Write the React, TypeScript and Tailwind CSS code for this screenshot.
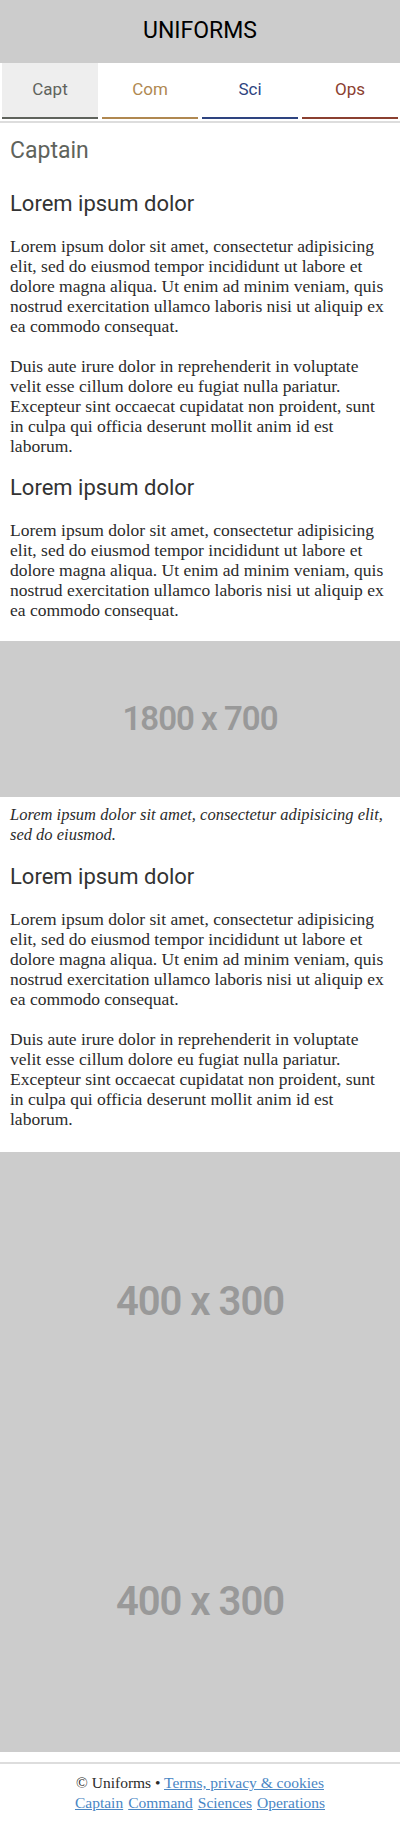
import React from 'react';

const tabs = [
  { label: 'Capt', text: 'text-[#5f635c]', border: 'border-[#5f635c]', bg: 'bg-[#eeeeee]' },
  { label: 'Com', text: 'text-[#b08850]', border: 'border-[#b08850]', bg: 'bg-white' },
  { label: 'Sci', text: 'text-[#2e4480]', border: 'border-[#2e4480]', bg: 'bg-white' },
  { label: 'Ops', text: 'text-[#8b4030]', border: 'border-[#8b4030]', bg: 'bg-white' },
];

const loremA =
  'Lorem ipsum dolor sit amet, consectetur adipisicing elit, sed do eiusmod tempor incididunt ut labore et dolore magna aliqua. Ut enim ad minim veniam, quis nostrud exercitation ullamco laboris nisi ut aliquip ex ea commodo consequat.';
const loremB =
  'Duis aute irure dolor in reprehenderit in voluptate velit esse cillum dolore eu fugiat nulla pariatur. Excepteur sint occaecat cupidatat non proident, sunt in culpa qui officia deserunt mollit anim id est laborum.';

function Placeholder({ label, h, size }: { label: string; h: string; size: string }) {
  return (
    <div className={`w-full ${h} bg-[#cccccc] flex items-center justify-center`}>
      <span className={`font-['Roboto',sans-serif] font-semibold text-[#999999] tracking-[-1px] ${size}`}>{label}</span>
    </div>
  );
}

export default function App() {
  const heading = "font-['Roboto',sans-serif] text-[22px] leading-[24px] text-[#333333]";
  const body = "font-['Liberation_Serif',serif] text-[17.5px] leading-[20px] text-[#2b2b2b]";

  return (
    <div className="w-[400px] bg-white">
      <header className="h-[63px] bg-[#cccccc] flex items-center justify-center">
        <h1 className="font-['Roboto',sans-serif] text-[23px] text-black">UNIFORMS</h1>
      </header>

      <nav className="flex gap-1 px-[2px] pb-[2px] border-b-2 border-[#dddddd]">
        {tabs.map(t => (
          <a
            key={t.label}
            className={`flex-1 h-[56px] flex items-center justify-center border-b-2 font-['Roboto',sans-serif] text-[17px] ${t.text} ${t.border} ${t.bg}`}
          >
            {t.label}
          </a>
        ))}
      </nav>

      <main className="px-[10px]">
        <h2 className="mt-[14px] mb-[27px] font-['Roboto',sans-serif] text-[23px] leading-[28px] text-[#5f635c]">Captain</h2>
        <h3 className={`${heading} mb-5`}>Lorem ipsum dolor</h3>
        <p className={`${body} mb-5`}>{loremA}</p>
        <p className={`${body} mb-5`}>{loremB}</p>
        <h3 className={`${heading} mb-5`}>Lorem ipsum dolor</h3>
        <p className={`${body} mb-[21px]`}>{loremA}</p>
      </main>

      <Placeholder label="1800 x 700" h="h-[156px]" size="text-[33px]" />

      <div className="px-[10px]">
        <p className="mt-2 mb-5 font-['Liberation_Serif',serif] italic text-[16.5px] leading-[20px] text-[#2b2b2b]">
          Lorem ipsum dolor sit amet, consectetur adipisicing elit, sed do eiusmod.
        </p>
        <h3 className={`${heading} mb-5`}>Lorem ipsum dolor</h3>
        <p className={`${body} mb-5`}>{loremA}</p>
        <p className={`${body} mb-[23px]`}>{loremB}</p>
      </div>

      <Placeholder label="400 x 300" h="h-[300px]" size="text-[40px]" />
      <Placeholder label="400 x 300" h="h-[300px]" size="text-[40px]" />

      <footer className="mt-[10px] border-t-2 border-[#dddddd] pt-[9px] pb-[12px] text-center font-['Liberation_Serif',serif] text-[15.5px] leading-[20px] text-[#2b2b2b]">
        <p>
          © Uniforms • <a className="text-[#4a86c4] underline">Terms, privacy &amp; cookies</a>
        </p>
        <p className="flex justify-center gap-[5px]">
          <a className="text-[#4a86c4] underline">Captain</a>
          <a className="text-[#4a86c4] underline">Command</a>
          <a className="text-[#4a86c4] underline">Sciences</a>
          <a className="text-[#4a86c4] underline">Operations</a>
        </p>
      </footer>
    </div>
  );
}
